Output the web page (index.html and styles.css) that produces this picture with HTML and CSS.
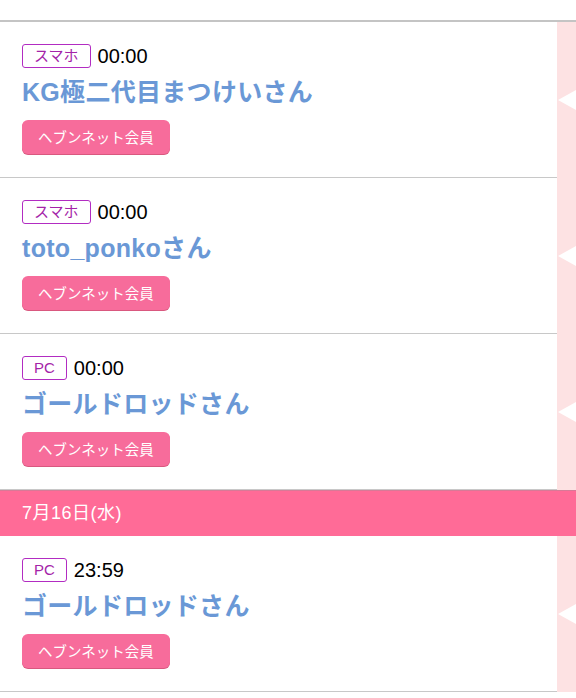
FILE: index.html
```html
<!DOCTYPE html>
<html lang="ja">
<head>
    <meta charset="UTF-8">
    <meta name="viewport" content="width=device-width, initial-scale=1.0">
    <link rel="stylesheet" href="styles.css">
    <title>アクセス履歴</title>
</head>
<body>
    <div class="history">
        <div class="entry">
            <div class="entry-body">
                <div class="entry-meta">
                    <span class="device">スマホ</span>
                    <span class="time">00:00</span>
                </div>
                <div class="entry-name">KG極二代目まつけいさん</div>
                <span class="member">ヘブンネット会員</span>
            </div>
            <div class="entry-arrow"></div>
        </div>
        <div class="entry">
            <div class="entry-body">
                <div class="entry-meta">
                    <span class="device">スマホ</span>
                    <span class="time">00:00</span>
                </div>
                <div class="entry-name">toto_ponkoさん</div>
                <span class="member">ヘブンネット会員</span>
            </div>
            <div class="entry-arrow"></div>
        </div>
        <div class="entry">
            <div class="entry-body">
                <div class="entry-meta">
                    <span class="device">PC</span>
                    <span class="time">00:00</span>
                </div>
                <div class="entry-name">ゴールドロッドさん</div>
                <span class="member">ヘブンネット会員</span>
            </div>
            <div class="entry-arrow"></div>
        </div>

        <div class="date-bar">7月16日(水)</div>

        <div class="entry">
            <div class="entry-body">
                <div class="entry-meta">
                    <span class="device">PC</span>
                    <span class="time">23:59</span>
                </div>
                <div class="entry-name">ゴールドロッドさん</div>
                <span class="member">ヘブンネット会員</span>
            </div>
            <div class="entry-arrow"></div>
        </div>
    </div>
</body>
</html>
```

FILE: styles.css
```css
body {
    margin: 0;
    padding-top: 20px;
    background-color: #fff;
    font-family: "Liberation Sans", "Noto Sans CJK JP", sans-serif;
    color: #000;
}

.history {
    border-top: 2px solid #c4c4c4;
}

.entry {
    display: flex;
}

.entry-body {
    flex: 1;
    padding: 22px 22px 23px;
    border-bottom: 1px solid #c8c8c8;
}

.entry-meta {
    display: flex;
    align-items: center;
    gap: 7px;
    height: 24px;
}

.device {
    display: inline-block;
    height: 22px;
    line-height: 22px;
    padding: 0 11px;
    border: 1px solid #b22cc2;
    border-radius: 3px;
    font-size: 15px;
    color: #a424a8;
}

.time {
    font-size: 20px;
}

.entry-name {
    margin-top: 6px;
    line-height: 36px;
    font-size: 25px;
    font-weight: bold;
    letter-spacing: 0.3px;
    color: #6a98d6;
}

.member {
    display: inline-block;
    margin-top: 10px;
    height: 34px;
    line-height: 34px;
    padding: 0 16px;
    background-color: #f76c9b;
    border-radius: 6px;
    box-shadow: 0 1px 0 #d9587f;
    font-size: 14.5px;
    color: #fff;
    font-family: "Noto Sans CJK JP", sans-serif;
}

.entry-arrow {
    width: 19px;
    background-color: #fde2e3;
    display: flex;
    align-items: center;
    justify-content: flex-end;
}

.entry-arrow::before {
    content: "";
    border-top: 10px solid transparent;
    border-bottom: 10px solid transparent;
    border-right: 18px solid #fff;
}

.date-bar {
    height: 45px;
    line-height: 45px;
    padding: 0 22px;
    border-top: 1px solid #d77a97;
    background-color: #ff6b97;
    font-size: 18px;
    letter-spacing: 0.5px;
    color: #fff;
}
```
